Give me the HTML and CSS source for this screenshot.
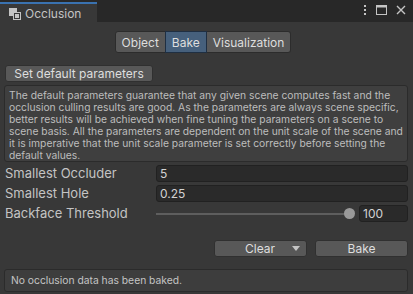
FILE: index.html
```html
<!DOCTYPE html>
<html lang="en">
<head>
  <meta charset="UTF-8" />
  <meta name="viewport" content="width=device-width, initial-scale=1.0"/>
  <title>Occlusion</title>
  <link rel="stylesheet" href="styles.css">
</head>
<body>
  <div class="tabbar">
    <div class="tab">
      <svg class="tab-icon" width="12" height="12" viewBox="0 0 12 12">
        <rect x="0" y="0" width="8" height="8" fill="#c4c4c4"/>
        <rect x="4.5" y="4.5" width="7" height="7" fill="#383838" stroke="#c4c4c4"/>
        <rect x="6" y="6" width="4" height="4" fill="#c4c4c4"/>
      </svg>
      <span>Occlusion</span>
    </div>
    <div class="tab-tools">
      <svg width="4" height="10" viewBox="0 0 4 10">
        <rect x="1" y="0" width="2" height="2" fill="#c4c4c4"/>
        <rect x="1" y="4" width="2" height="2" fill="#c4c4c4"/>
        <rect x="1" y="8" width="2" height="2" fill="#c4c4c4"/>
      </svg>
      <svg width="11" height="10" viewBox="0 0 11 10">
        <rect x="0.5" y="0.5" width="10" height="9" fill="none" stroke="#c4c4c4"/>
        <rect x="0.5" y="0.5" width="10" height="2" fill="#c4c4c4"/>
      </svg>
      <svg width="10" height="10" viewBox="0 0 10 10">
        <path d="M1 1 L9 9 M9 1 L1 9" stroke="#c4c4c4" stroke-width="1.4"/>
      </svg>
    </div>
  </div>

  <div class="toolbar">
    <button class="tb-btn">Object</button>
    <button class="tb-btn active">Bake</button>
    <button class="tb-btn">Visualization</button>
  </div>

  <button class="btn defaults-btn">Set default parameters</button>

  <div class="help-box">
    The default parameters guarantee that any given scene computes fast and the occlusion culling results are good. As the parameters are always scene specific, better results will be achieved when fine tuning the parameters on a scene to scene basis. All the parameters are dependent on the unit scale of the scene and<br>it is imperative that the unit scale parameter is set correctly before setting the default values.
  </div>

  <div class="props">
    <label>Smallest Occluder</label>
    <div class="field">5</div>
    <label>Smallest Hole</label>
    <div class="field">0.25</div>
    <label>Backface Threshold</label>
    <div class="slider-row">
      <div class="slider">
        <div class="track"></div>
        <div class="knob"></div>
      </div>
      <div class="field value">100</div>
    </div>
  </div>

  <div class="actions">
    <button class="btn clear-btn">
      <span>Clear</span>
      <svg width="8" height="5" viewBox="0 0 8 5"><path d="M0 0 L8 0 L4 5 Z" fill="#c4c4c4"/></svg>
    </button>
    <button class="btn bake-btn">Bake</button>
  </div>

  <div class="status-box">No occlusion data has been baked.</div>
</body>
</html>
```

FILE: styles.css
```css
* {
  margin: 0;
  padding: 0;
  box-sizing: border-box;
}

body {
  width: 413px;
  height: 294px;
  overflow: hidden;
  background-color: #383838;
  font-family: Inter, "Noto Sans", sans-serif;
  font-size: 12px;
  color: #c4c4c4;
}

.tabbar {
  height: 22px;
  display: flex;
  justify-content: space-between;
  background-color: #282828;
}

.tab {
  width: 97px;
  margin-top: 2px;
  border-top: 2px solid #3a72b0;
  background-color: #383838;
  display: flex;
  align-items: center;
  gap: 4px;
  padding-left: 9px;
}

.tab-icon {
  margin-top: 1px;
}

.tab-tools {
  display: flex;
  align-items: center;
  gap: 9px;
  padding-right: 7px;
  padding-bottom: 2px;
}

button {
  font-family: Inter, "Noto Sans", sans-serif;
  font-size: 12px;
  color: #dedede;
  cursor: pointer;
}

.toolbar {
  display: flex;
  justify-content: center;
  margin-top: 9px;
  padding-right: 7px;
}

.tb-btn {
  height: 22px;
  padding: 0 6px;
  background-color: #585858;
  border: 1px solid #2c2c2c;
  border-left: none;
}

.tb-btn:first-child {
  border-left: 1px solid #2c2c2c;
  border-radius: 3px 0 0 3px;
}

.tb-btn:last-child {
  border-radius: 0 3px 3px 0;
}

.tb-btn.active {
  background-color: #46607c;
  border-color: #1f2f42;
  border-left: 1px solid #1f2f42;
  margin-left: -1px;
}

.btn {
  height: 17px;
  background-color: #585858;
  border: 1px solid #303030;
  border-radius: 3px;
}

.defaults-btn {
  display: block;
  margin: 12px 0 0 5px;
  width: 148px;
}

.help-box {
  margin: 3px 5px 0 4px;
  height: 77px;
  padding: 3px 4px;
  background-color: #3f3f3f;
  border: 1px solid #2b2b2b;
  border-radius: 3px;
  font-size: 10.3px;
  line-height: 12px;
  color: #bdbdbd;
}

.props {
  display: grid;
  grid-template-columns: 151px 1fr;
  row-gap: 3px;
  margin-top: 3px;
  padding: 0 5px;
}

.props label {
  height: 17px;
  line-height: 17px;
  font-size: 13px;
}

.field {
  height: 17px;
  line-height: 15px;
  padding: 0 3px;
  background-color: #2a2a2a;
  border: 1px solid #212121;
  border-radius: 3px;
  color: #d2d2d2;
}

.slider-row {
  display: flex;
  align-items: center;
  gap: 5px;
}

.slider {
  flex: 1;
  position: relative;
  height: 17px;
  display: flex;
  align-items: center;
}

.track {
  width: 100%;
  height: 2px;
  background-color: #5e5e5e;
}

.knob {
  position: absolute;
  right: -1px;
  top: 3px;
  width: 11px;
  height: 11px;
  border-radius: 50%;
  background-color: #999999;
}

.field.value {
  width: 49px;
}

.actions {
  display: flex;
  justify-content: flex-end;
  gap: 8px;
  margin-top: 18px;
  padding-right: 5px;
}

.clear-btn,
.bake-btn {
  width: 93px;
}

.clear-btn {
  display: flex;
  align-items: center;
  justify-content: flex-end;
  gap: 17px;
  padding-right: 6px;
}

.status-box {
  margin: 12px 5px 0 4px;
  height: 23px;
  line-height: 21px;
  padding-left: 6px;
  background-color: #3d3d3d;
  border: 1px solid #2b2b2b;
  border-radius: 3px;
  font-size: 10.3px;
  color: #c4c4c4;
}
```
